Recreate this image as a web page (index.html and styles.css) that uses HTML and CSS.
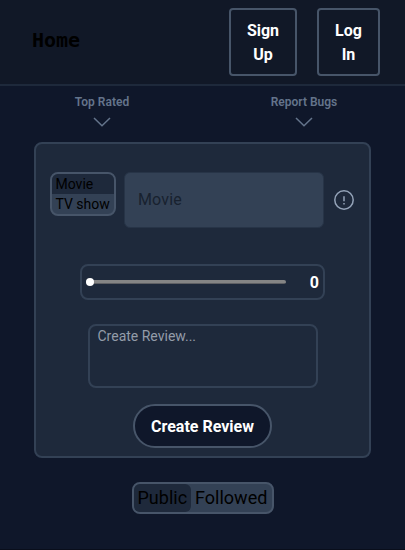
FILE: index.html
```html
<!DOCTYPE html>
<html lang="en">
<head>
<meta charset="utf-8">
<title>Home</title>
<link rel="stylesheet" href="styles.css">
</head>
<body>
<header class="header">
  <a class="brand">Home</a>
  <nav class="auth">
    <button class="auth-btn signup">Sign<br>Up</button>
    <button class="auth-btn login">Log<br>In</button>
  </nav>
</header>
<div class="menus">
  <div class="menu">
    <span>Top Rated</span>
    <svg class="chevron" width="18" height="10" viewBox="0 0 18 10"><path d="M1 1l8 7.8L17 1"/></svg>
  </div>
  <div class="menu">
    <span>Report Bugs</span>
    <svg class="chevron" width="18" height="10" viewBox="0 0 18 10"><path d="M1 1l8 7.8L17 1"/></svg>
  </div>
</div>
<main class="card">
  <div class="search">
    <div class="kind">
      <div class="kind-item active">Movie</div>
      <div class="kind-item">TV show</div>
    </div>
    <div class="field"><span>Movie</span></div>
    <svg class="info" width="20" height="20" viewBox="0 0 20 20"><circle cx="10" cy="10" r="9.2"/><path d="M10 6.2v5M10 13v1.4"/></svg>
  </div>
  <div class="rating">
    <div class="rail"><div class="thumb"></div></div>
    <span class="score">0</span>
  </div>
  <div class="review">Create Review...</div>
  <button class="create">Create Review</button>
</main>
<div class="feed">
  <div class="feed-item active">Public</div>
  <div class="feed-item">Followed</div>
</div>
</body>
</html>
```
FILE: styles.css
```css
* { box-sizing: border-box; }
html { background: #0f172a; }
body {
  margin: 0;
  height: 550px;
  overflow: hidden;
  font-family: Roboto, sans-serif;
  color: #000;
  background: #0f172a;
  border-bottom: 1px solid #090e1b;
}
button { font-family: inherit; color: #fff; padding: 0; }
.header {
  display: flex;
  justify-content: space-between;
  align-items: flex-start;
  height: 86px;
  padding: 8px 25px 0 32px;
  background: #111827;
  border-bottom: 2px solid #1e293b;
}
.brand {
  font: bold 20px/28px "DejaVu Sans Mono", monospace;
  margin-top: 18px;
}
.auth { display: flex; gap: 20px; }
.auth-btn {
  height: 68px;
  padding-top: 1px;
  background: transparent;
  border: 2px solid #475569;
  border-radius: 4px;
  font-size: 16px;
  font-weight: 700;
  line-height: 24px;
}
.signup { width: 68px; }
.login { width: 63px; }
.menus {
  display: flex;
  height: 56px;
  padding: 8px 0 0 1px;
}
.menu {
  flex: 1;
  display: flex;
  flex-direction: column;
  align-items: center;
  gap: 7px;
  font-size: 12px;
  line-height: 16px;
  font-weight: 600;
  color: #64748b;
}
.chevron, .info { fill: none; stroke: #64748b; stroke-width: 1.5; }
.card {
  display: flex;
  flex-direction: column;
  align-items: center;
  width: 337px;
  height: 316px;
  margin-left: 34px;
  padding-top: 28px;
  background: #1e293b;
  border: 2px solid #334155;
  border-radius: 8px;
}
.search {
  display: flex;
  align-items: flex-start;
  width: 305px;
  height: 56px;
}
.kind {
  flex: none;
  width: 66px;
  height: 44px;
  margin-left: -0.5px;
  background: #334155;
  border: 2px solid #475569;
  border-radius: 8px;
  overflow: hidden;
  font-size: 14px;
  line-height: 20px;
}
.kind-item { padding-left: 4px; height: 20px; white-space: nowrap; }
.kind-item.active { background: #1e293b; }
.field {
  flex: none;
  width: 200px;
  height: 56px;
  margin-left: 8px;
  padding: 15px 13.5px;
  background: #334155;
  border: 1px solid #273447;
  border-radius: 6px;
  font-size: 16px;
  line-height: 23px;
  letter-spacing: 0.15px;
  color: #18212f;
}
.info { margin: 18px 0 0 10px; flex: none; stroke: #94a3b8; }
.rating {
  display: flex;
  align-items: center;
  justify-content: space-between;
  width: 245px;
  height: 36px;
  margin-top: 36px;
  padding: 0 4px;
  border: 2px solid #334155;
  border-radius: 8px;
}
.rail {
  display: flex;
  align-items: center;
  width: 200px;
  height: 4px;
  background: linear-gradient(#858585 0 75%, #5f6064 75%);
  border-radius: 2px;
}
.thumb { width: 8px; height: 8px; background: #fff; border-radius: 50%; }
.score { color: #fff; font-size: 16px; font-weight: 700; line-height: 24px; padding-top: 1px; }
.review {
  width: 230px;
  height: 64px;
  margin-top: 24px;
  padding: 0 8px;
  border: 2px solid #334155;
  border-radius: 8px;
  font-size: 14px;
  line-height: 20px;
  color: #949ca9;
}
.create {
  width: 139px;
  height: 44px;
  margin-top: 16px;
  background: #0f172a;
  border: 2px solid #475569;
  border-radius: 22px;
  font-size: 16px;
  font-weight: 700;
}
.feed {
  display: flex;
  width: 142px;
  height: 32px;
  margin: 24px auto 0;
  background: #334155;
  border: 2px solid #475569;
  border-radius: 8px;
  font-size: 18px;
  line-height: 28px;
}
.feed-item { padding: 0 4px; }
.feed-item.active { background: #1e293b; border-radius: 6px; }
```
